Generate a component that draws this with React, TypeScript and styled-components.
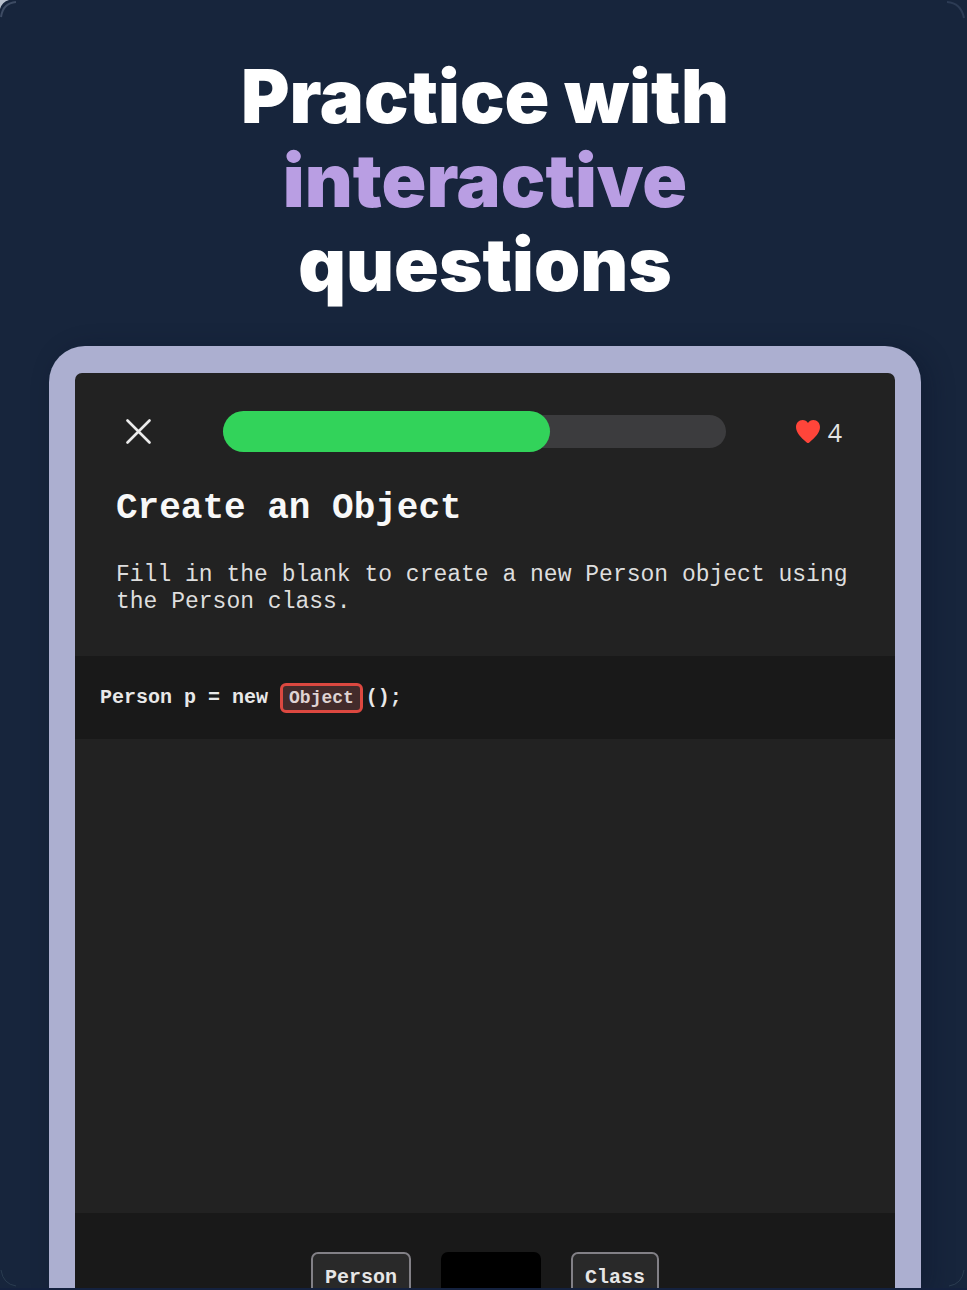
import React from "react";
import styled, { createGlobalStyle } from "styled-components";

const mono = '"Liberation Mono", monospace';

const GlobalStyle = createGlobalStyle`
  *, *::before, *::after { box-sizing: border-box; }
  body { margin: 0; background: #14223d; }
  button { margin: 0; cursor: pointer; }
`;

const Page = styled.main`
  position: relative;
  display: flex;
  flex-direction: column;
  height: 100vh;
  padding: 54px 46px 0 49px;
  overflow: hidden;
  background: #17253c;
  border-bottom: 2px solid #14213e;
`;

const Corners = styled.svg`
  position: absolute;
  inset: 0;
  width: 100%;
  height: 100%;
  pointer-events: none;
`;

const Title = styled.h1`
  margin: 0 0 40px;
  color: #ffffff;
  font: 900 74px/84px Inter, sans-serif;
  text-align: center;
`;

const TitleLine = styled.span<{ $accent?: boolean }>`
  display: block;
  color: ${(p) => (p.$accent ? "#b99ee3" : "inherit")};
`;

const Device = styled.section`
  flex: 1;
  min-height: 0;
  display: flex;
  padding: 27px 26px 0;
  border-radius: 36px 36px 0 0;
  background: #acafd0;
  box-shadow: 8px 4px 24px rgba(8, 16, 40, 0.35);
`;

const Screen = styled.div`
  flex: 1;
  min-width: 0;
  display: flex;
  flex-direction: column;
  overflow: hidden;
  border-radius: 7px 7px 0 0;
  background: #222222;
`;

const TopBar = styled.header`
  display: flex;
  align-items: center;
  height: 41px;
  margin: 38px 53px 37px 51px;
`;

const CloseButton = styled.button`
  display: flex;
  padding: 0;
  border: 0;
  background: none;
  color: #ebebeb;
`;

const Progress = styled.div`
  flex: 1;
  display: flex;
  align-items: center;
  height: 33px;
  margin: 0 70px 0 72px;
  border-radius: 17px;
  background: #3c3c3e;
`;

const ProgressFill = styled.div`
  height: 41px;
  flex-shrink: 0;
  border-radius: 21px;
  background: #32d35a;
`;

const Lives = styled.div`
  display: flex;
  align-items: center;
  gap: 8px;
  color: #e4e4e4;
  font: 400 25px/32px "Open Sans", sans-serif;
`;

const Prompt = styled.div`
  padding: 0 24px 0 41px;
  margin-bottom: 40px;
`;

const Heading = styled.h2`
  margin: 0 0 33px;
  color: #f8f8f8;
  font: 700 36px/40px ${mono};
`;

const Instructions = styled.p`
  margin: 0;
  color: #dedede;
  font: 400 23px/27px ${mono};
`;

const CodePanel = styled.div`
  display: flex;
  align-items: center;
  height: 83px;
  padding: 0 25px;
  background: #191919;
  color: #e8e8e8;
  font: 700 20px/28px ${mono};
  white-space: pre;
`;

const Slot = styled.button`
  height: 30px;
  padding: 0 6px;
  margin-right: 3px;
  border: 3px solid #dc4840;
  border-radius: 6px;
  background: #432b2b;
  color: #dfd3d3;
  font: 700 18px/24px ${mono};
`;

const Workspace = styled.div`
  flex: 1;
`;

const Choices = styled.footer`
  display: flex;
  align-items: flex-start;
  justify-content: center;
  gap: 30px;
  height: 75px;
  padding-top: 39px;
  overflow: hidden;
  background: #191919;
`;

const Choice = styled.button<{ $used?: boolean }>`
  height: 52px;
  padding: 0 12px;
  border: 2px solid ${(p) => (p.$used ? "#000000" : "#828086")};
  border-radius: 7px;
  background: ${(p) => (p.$used ? "#000000" : "#292929")};
  color: ${(p) => (p.$used ? "#000000" : "#e6e6e6")};
  font: 700 20px/20px ${mono};
`;

const UsedSpace = styled.span`
  display: block;
  width: 72px;
`;

const progress = 65;

export default function App() {
  return (
    <>
      <GlobalStyle />
      <Page>
        <Title>
          <TitleLine>Practice with</TitleLine>
          <TitleLine $accent>interactive</TitleLine>
          <TitleLine>questions</TitleLine>
        </Title>
        <Device>
          <Screen>
            <TopBar>
              <CloseButton aria-label="Close">
                <svg width="25" height="25" viewBox="0 0 25 25" fill="none" stroke="currentColor" strokeWidth="2.6" strokeLinecap="round">
                  <path d="M1.5 1.5 23.5 23.5M23.5 1.5 1.5 23.5" />
                </svg>
              </CloseButton>
              <Progress role="progressbar" aria-label="Lesson progress" aria-valuenow={progress} aria-valuemin={0} aria-valuemax={100}>
                <ProgressFill style={{ width: `${progress}%` }} />
              </Progress>
              <Lives>
                <svg width="24" height="23" viewBox="0 0 24 23" fill="#ff453a" aria-hidden="true">
                  <path d="M12 3C10.900 1 8.900 0 6.600 0 2.800 0 0 3 0 7.100c0 5.600 4.700 10.500 10.700 15.300.9.7 1.700.7 2.600 0C19.300 17.600 24 12.700 24 7.100 24 3 21.200 0 17.400 0 15.100 0 13.100 1 12 3Z" />
                </svg>
                <span>4</span>
              </Lives>
            </TopBar>
            <Prompt>
              <Heading>Create an Object</Heading>
              <Instructions>
                Fill in the blank to create a new Person object using the Person class.
              </Instructions>
            </Prompt>
            <CodePanel>
              <span>{"Person p = new "}</span>
              <Slot>Object</Slot>
              <span>();</span>
            </CodePanel>
            <Workspace />
            <Choices>
              <Choice>Person</Choice>
              <Choice $used disabled aria-label="Used answer">
                <UsedSpace />
              </Choice>
              <Choice>Class</Choice>
            </Choices>
          </Screen>
        </Device>
        <Corners aria-hidden="true">
          <path d="M0 0H9Q2 2 0 9Z" fill="#b9c1ce" />
          <path d="M1 17Q3 3 16 2" fill="none" stroke="#3d4b63" strokeWidth="2" />
          <svg x="100%" overflow="visible">
            <path d="M-20 2Q-6 3-3 18" fill="none" stroke="#2c3b54" strokeWidth="2" />
          </svg>
          <svg y="100%" overflow="visible">
            <path d="M1-18Q3-4 16-2" fill="none" stroke="#2a3c50" strokeWidth="1" />
          </svg>
          <svg x="100%" y="100%" overflow="visible">
            <path d="M-3-18Q-5-4-18-2" fill="none" stroke="#2a3c50" strokeWidth="1" />
          </svg>
        </Corners>
      </Page>
    </>
  );
}
